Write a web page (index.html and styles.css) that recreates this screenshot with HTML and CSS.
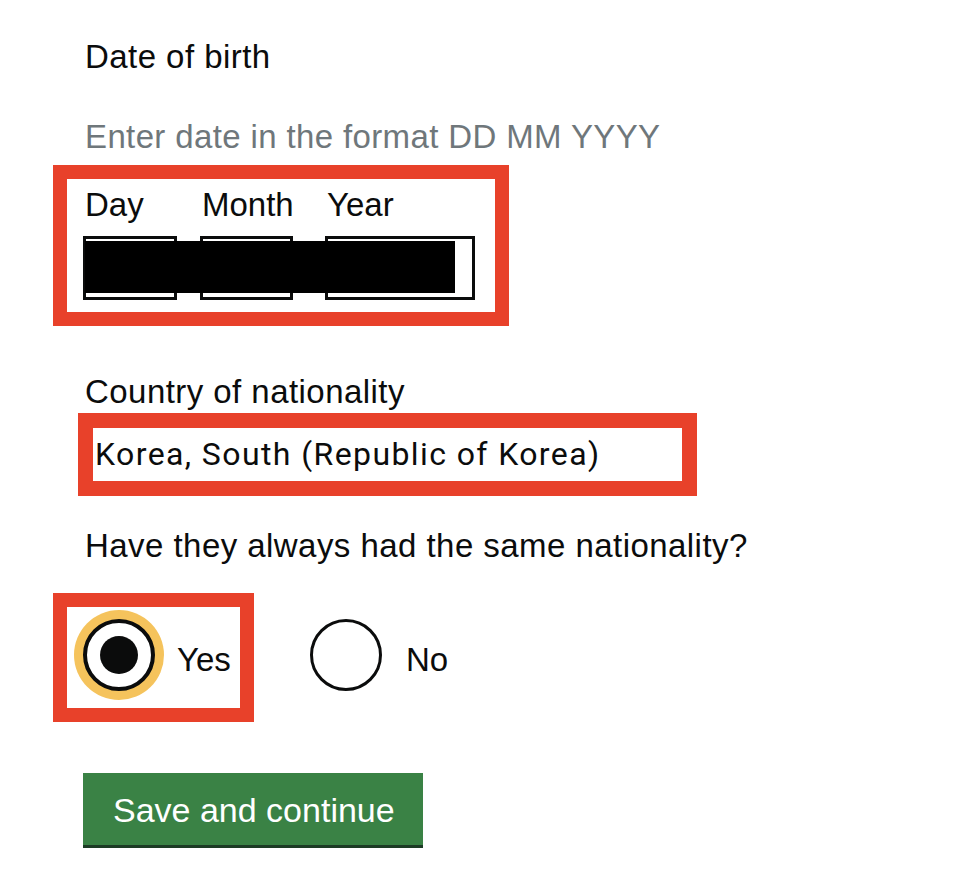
FILE: index.html
```html
<!DOCTYPE html>
<html lang="en">
<head>
<meta charset="utf-8">
<title>Date of birth</title>
<link rel="stylesheet" href="styles.css">
</head>
<body>
<main class="page">
  <div class="field-label">Date of birth</div>
  <div class="hint">Enter date in the format DD MM YYYY</div>

  <div class="mark mark--date">
    <div class="date-fields">
      <div class="date-item date-item--day">
        <label class="date-label">Day</label>
        <div class="text-input"></div>
      </div>
      <div class="date-item date-item--month">
        <label class="date-label">Month</label>
        <div class="text-input"></div>
      </div>
      <div class="date-item date-item--year">
        <label class="date-label">Year</label>
        <div class="text-input"></div>
      </div>
      <div class="redaction"></div>
    </div>
  </div>

  <div class="field-label field-label--country">Country of nationality</div>
  <div class="mark mark--country">
    <div class="select-value">Korea, South (Republic of Korea)</div>
  </div>

  <div class="field-label field-label--question">Have they always had the same nationality?</div>
  <div class="radios">
    <div class="mark mark--radio">
      <div class="radio-option">
        <span class="radio radio--checked"><span class="radio-dot"></span></span>
        <span class="radio-label">Yes</span>
      </div>
    </div>
    <div class="radio-option radio-option--no">
      <span class="radio"></span>
      <span class="radio-label radio-label--no">No</span>
    </div>
  </div>

  <button class="button" type="button">Save and continue</button>
</main>
</body>
</html>
```

FILE: styles.css
```css
* { box-sizing: border-box; }

html, body {
  margin: 0;
  background: #ffffff;
}

.page {
  padding: 37px 0 40px 85px;
  font-family: "Liberation Sans", Arial, sans-serif;
  font-size: 33px;
  line-height: 40px;
  color: #0b0c0c;
}

.field-label {
  display: block;
  letter-spacing: 0.45px;
}

.hint {
  margin-top: 40px;
  color: #6f777b;
  letter-spacing: 0.37px;
}

.mark {
  border: 14px solid #e8412a;
}

.mark--date {
  margin-top: 8px;
  margin-left: -32px;
  width: 456px;
  padding: 6px 0 12px 16px;
}

.date-fields {
  position: relative;
  display: flex;
}

.date-item {
  display: flex;
  flex-direction: column;
}

.date-item--day { width: 94px; margin-right: 23px; }
.date-item--month { width: 93px; margin-right: 32px; }
.date-item--year { width: 150px; }

.date-label {
  padding-left: 2px;
  white-space: nowrap;
}

.text-input {
  margin-top: 11px;
  height: 64px;
  border: 3px solid #0b0c0c;
  background: #ffffff;
}

.redaction {
  position: absolute;
  left: 2px;
  top: 56px;
  width: 370px;
  height: 52px;
  background: #000000;
}

.field-label--country {
  margin-top: 46px;
}

.mark--country {
  margin-top: 1px;
  margin-left: -7px;
  width: 619px;
  border-width: 15px;
  height: 83px;
  padding-left: 2px;
}

.select-value {
  font-family: Roboto, "Liberation Sans", sans-serif;
  font-size: 32px;
  line-height: 53px;
  letter-spacing: 1.4px;
  white-space: nowrap;
}

.field-label--question {
  margin-top: 30px;
}

.radios {
  display: flex;
  align-items: flex-start;
  margin-top: 27px;
}

.mark--radio {
  margin-left: -32px;
  width: 201px;
  height: 129px;
  padding: 12px 0 0 16px;
}

.radio-option {
  display: flex;
  align-items: flex-start;
}

.radio-option--no {
  margin-left: 56px;
  margin-top: 26px;
}

.radio {
  flex: none;
  display: flex;
  align-items: center;
  justify-content: center;
  width: 72px;
  height: 72px;
  border: 3px solid #0b0c0c;
  border-radius: 50%;
  background: #ffffff;
}

.radio--checked {
  border-width: 4px;
  box-shadow: 0 0 0 9px #f5c35c;
}

.radio-dot {
  width: 38px;
  height: 38px;
  border-radius: 50%;
  background: #0b0c0c;
}

.radio-label {
  margin-left: 22px;
  margin-top: 21px;
}

.radio-label--no {
  margin-left: 24px;
}

.button {
  display: block;
  margin-top: 51px;
  margin-left: -2px;
  width: 340px;
  height: 72px;
  padding: 2px 0 0 30px;
  border: 0;
  border-radius: 0;
  background: #3a8245;
  box-shadow: 0 3px 0 #1c3b25;
  color: #ffffff;
  font-family: "Liberation Sans", Arial, sans-serif;
  font-size: 34px;
  line-height: 70px;
  text-align: left;
  cursor: pointer;
}
```
